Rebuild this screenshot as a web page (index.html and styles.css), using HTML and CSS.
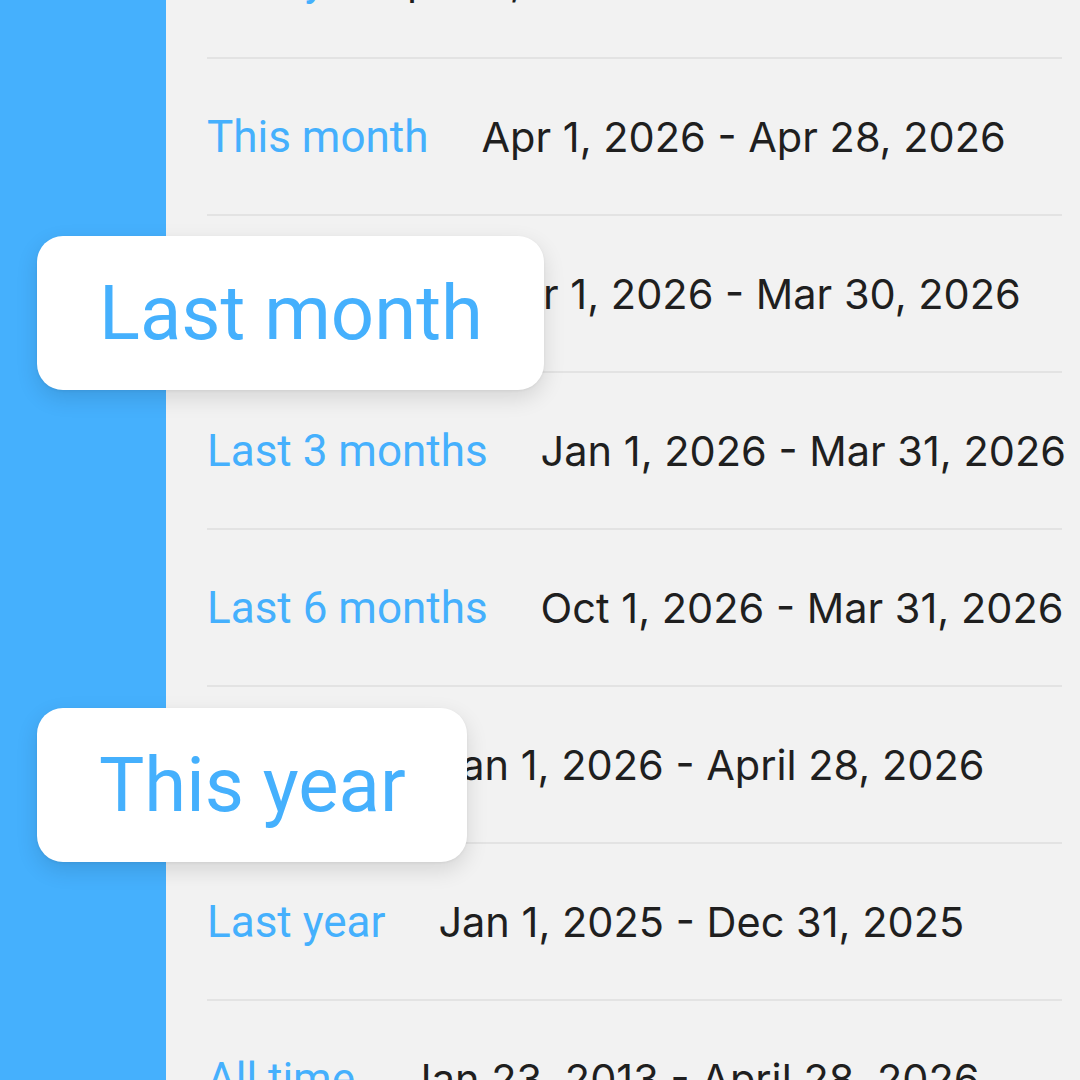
FILE: index.html
```html
<!DOCTYPE html>
<html lang="en">

<head>
    <meta charset="UTF-8">
    <meta name="viewport" content="width=device-width, initial-scale=1.0">
    <title>Date ranges</title>
    <link rel="stylesheet" href="styles.css">
</head>

<body>
    <main class="app">
        <aside class="sidebar"></aside>

        <section class="panel" aria-label="Date ranges">
            <ul class="range-list">
                <li class="range-row"><span class="range-label">Today</span><span class="range-dates">Apr 28, 2026</span></li>
                <li class="range-row"><span class="range-label">This month</span><span class="range-dates">Apr 1, 2026 - Apr 28, 2026</span></li>
                <li class="range-row"><span class="range-label">Last month</span><span class="range-dates">Mar 1, 2026 - Mar 30, 2026</span></li>
                <li class="range-row"><span class="range-label">Last 3 months</span><span class="range-dates">Jan 1, 2026 - Mar 31, 2026</span></li>
                <li class="range-row"><span class="range-label">Last 6 months</span><span class="range-dates">Oct 1, 2026 - Mar 31, 2026</span></li>
                <li class="range-row"><span class="range-label">This year</span><span class="range-dates">Jan 1, 2026 - April 28, 2026</span></li>
                <li class="range-row"><span class="range-label">Last year</span><span class="range-dates">Jan 1, 2025 - Dec 31, 2025</span></li>
                <li class="range-row"><span class="range-label">All time</span><span class="range-dates">Jan 23, 2013 - April 28, 2026</span></li>
            </ul>
        </section>

        <!-- highlighted chips floating over the list -->
        <div class="chip chip-last-month">Last month</div>
        <div class="chip chip-this-year">This year</div>
    </main>
</body>

</html>
```

FILE: styles.css
```css
* {
    margin: 0;
    padding: 0;
    box-sizing: border-box;
}

body {
    width: 1080px;
    height: 1080px;
    overflow: hidden;
    background-color: #f2f2f2;
}

.app {
    position: relative;
    display: flex;
    width: 1080px;
    height: 1080px;
    overflow: hidden;
}

.sidebar {
    width: 166px;
    flex-shrink: 0;
    background-color: #45b0fd;
}

.panel {
    flex: 1;
    min-width: 0;
    background-color: #f2f2f2;
    padding: 0 18px 0 41px;
}

.range-list {
    list-style: none;
    margin-top: -98px;
}

.range-row {
    display: flex;
    align-items: center;
    height: 157px;
    border-bottom: 2px solid #e3e3e3;
    white-space: nowrap;
}

.range-label {
    font-family: 'Roboto', 'Liberation Sans', sans-serif;
    font-size: 44px;
    color: #45b0fd;
}

.range-dates {
    margin-left: 53px;
    font-family: 'Inter', 'Liberation Sans', sans-serif;
    font-size: 41.5px;
    color: #1f1f1f;
}

.chip {
    position: absolute;
    left: 37px;
    height: 154px;
    display: flex;
    align-items: center;
    padding: 0 61px 0 62px;
    background-color: #fff;
    border-radius: 26px;
    box-shadow: 0 8px 22px rgba(0, 0, 0, 0.12), 0 1px 3px rgba(0, 0, 0, 0.06);
    font-family: 'Roboto', 'Liberation Sans', sans-serif;
    font-size: 76px;
    color: #45b0fd;
    white-space: nowrap;
}

.chip-last-month {
    top: 236px;
}

.chip-this-year {
    top: 708px;
}
```
